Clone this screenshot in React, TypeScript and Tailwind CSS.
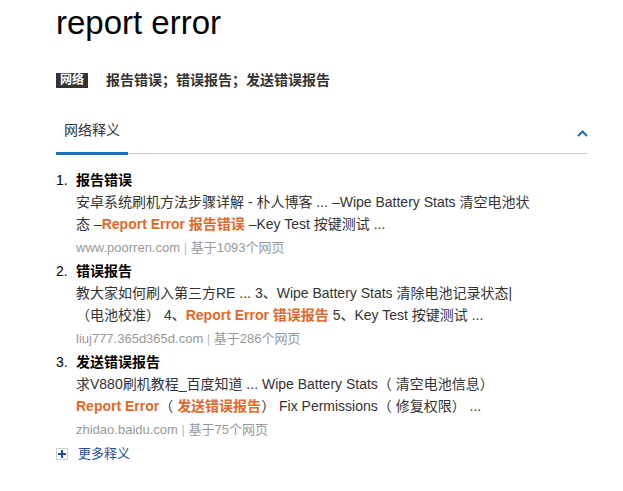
import React from "react";

const font = { fontFamily: '"Liberation Sans", "Noto Sans CJK SC", sans-serif' };

function Hi({ children }: { children: React.ReactNode }) {
  return <span className="font-bold text-[#e0692a]">{children}</span>;
}

export default function App() {
  return (
    <div className="w-[623px] h-[491px] bg-white text-[#333] pl-[56px] pr-[35px]" style={font}>
      <h1 className="text-[33px] leading-[40px] pt-[3px] text-black">report error</h1>
      <div className="flex items-center mt-[29px] h-[16px]">
        <span className="bg-[#333] text-white text-[12px] font-bold leading-[14px] px-[4px] h-[15px] flex items-center">网络</span>
        <span className="ml-[18px] text-[14px] font-bold text-[#333]">报告错误；错误报告；发送错误报告</span>
      </div>
      <div className="mt-[19px] relative border-b border-[#ccc] h-[47px]">
        <div className="absolute left-0 bottom-[-2px] w-[72px] h-[3px] bg-[#1a6fb5]" />
        <div className="pl-[8px] pt-[15px] text-[14px] leading-[16px] text-[#333]">网络释义</div>
        <svg className="absolute right-[0px] top-[23px]" width="11" height="7" viewBox="0 0 11 7">
          <path d="M1 6 L5.5 1.5 L10 6" fill="none" stroke="#1a6fb5" strokeWidth="2" />
        </svg>
      </div>
      <ol className="mt-[15px] text-[14px]">
        <li className="flex">
          <span className="w-[20px] text-black leading-[22px]">1.</span>
          <div>
            <div className="font-bold text-black leading-[22px]">报告错误</div>
            <div className="leading-[22px] text-[#333]">
              <div>安卓系统刷机方法步骤详解 - 朴人博客 ... –Wipe Battery Stats 清空电池状</div>
              <div>态 –<Hi>Report Error 报告错误</Hi> –Key Test 按键测试 ...</div>
            </div>
            <div className="text-[13px] leading-[24px] pt-[1px] text-[#999]">www.poorren.com <span className="text-[#bbb]">|</span> 基于1093个网页</div>
          </div>
        </li>
        <li className="flex">
          <span className="w-[20px] text-black leading-[22px]">2.</span>
          <div>
            <div className="font-bold text-black leading-[22px]">错误报告</div>
            <div className="leading-[22px] text-[#333]">
              <div>教大家如何刷入第三方RE ... 3、Wipe Battery Stats 清除电池记录状态|</div>
              <div>（电池校准） 4、<Hi>Report Error 错误报告</Hi> 5、Key Test 按键测试 ...</div>
            </div>
            <div className="text-[13px] leading-[24px] pt-[1px] text-[#999]">liuj777.365d365d.com <span className="text-[#bbb]">|</span> 基于286个网页</div>
          </div>
        </li>
        <li className="flex">
          <span className="w-[20px] text-black leading-[22px]">3.</span>
          <div>
            <div className="font-bold text-black leading-[22px]">发送错误报告</div>
            <div className="leading-[22px] text-[#333]">
              <div>求V880刷机教程_百度知道 ... Wipe Battery Stats（ 清空电池信息）</div>
              <div><Hi>Report Error</Hi>（ <Hi>发送错误报告</Hi>） Fix Permissions（ 修复权限） ...</div>
            </div>
            <div className="text-[13px] leading-[24px] pt-[1px] text-[#999]">zhidao.baidu.com <span className="text-[#bbb]">|</span> 基于75个网页</div>
          </div>
        </li>
      </ol>
      <div className="flex items-center mt-[2px]">
        <span className="w-[12px] h-[12px] border border-[#ccc] flex items-center justify-center">
          <svg width="8" height="8" viewBox="0 0 8 8"><path d="M4 0V8M0 4H8" stroke="#1a4fa0" strokeWidth="2" /></svg>
        </span>
        <span className="ml-[10px] text-[13px] text-[#1a4fa0]">更多释义</span>
      </div>
    </div>
  );
}
